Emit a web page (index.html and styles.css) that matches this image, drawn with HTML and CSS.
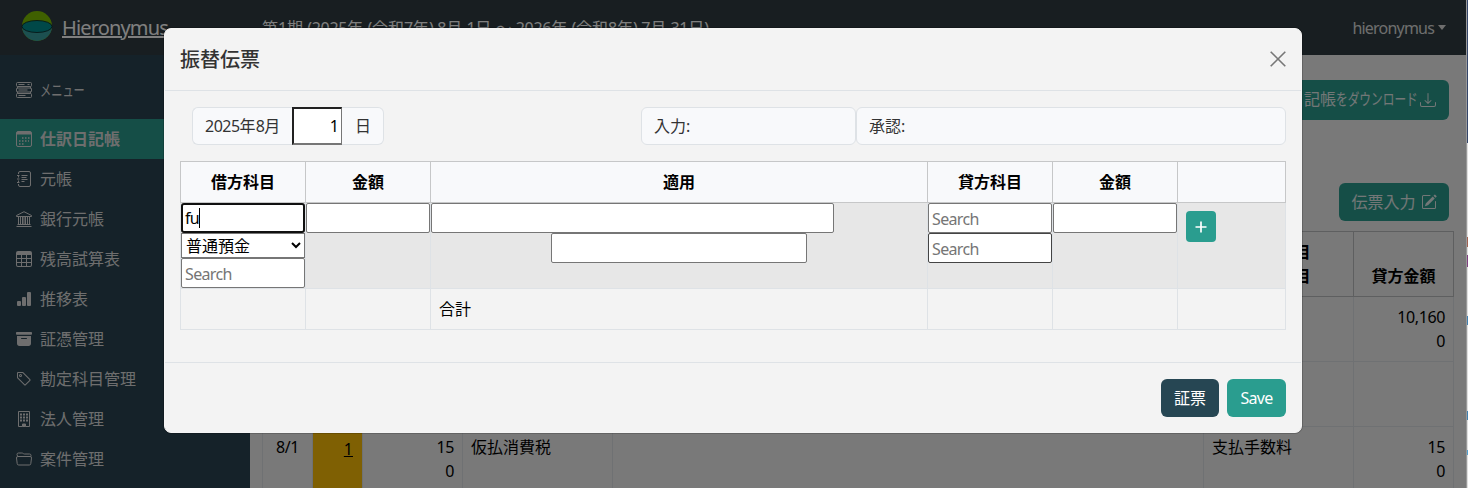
FILE: index.html
```html
<!DOCTYPE html>
<html lang="ja">
<head>
<meta charset="utf-8">
<title>Hieronymus</title>
<link rel="stylesheet" href="styles.css">
</head>
<body>
<div class="app">
  <header class="navbar">
    <svg class="logo" viewBox="0 0 32 32"><circle cx="16" cy="16" r="15" fill="#7fc000"/><path d="M1 16h30A15 15 0 0 1 1 16Z" fill="#38a0a0"/><ellipse cx="16" cy="16.500" rx="15" ry="6" fill="#009090" stroke="#0a2020" stroke-width=".8"/></svg>
    <a class="brand">Hieronymus</a>
    <div class="period">第<span class="n">1</span>期 <span class="n">(2025</span>年 <span class="n">(</span>令和<span class="n">7</span>年<span class="n">) 8</span>月 <span class="n">1</span>日 <span class="wave">〜</span> <span class="n">2026</span>年 <span class="n">(</span>令和<span class="n">8</span>年<span class="n">) 7</span>月 <span class="n">31</span>日<span class="n">)</span></div>
    <div class="user">hieronymus<i class="caret"></i></div>
  </header>
  <div class="body">
    <nav class="sidebar">
      <a class="item menu"><svg viewBox="0 0 16 16" class="line"><rect x=".5" y=".5" width="15" height="4" rx="1"/><path d="M1.500 4.500v2M14.500 4.500v2M1.500 9.500v2M14.500 9.500v2" /><rect x=".5" y="6" width="15" height="4" rx="1"/><rect x=".5" y="11.500" width="15" height="4" rx="1"/><path d="M2.500 2.500h6M2.500 8h9M2.500 13.500h7M11.500 2.500h2"/></svg><span class="kana">メニュー</span></a>
      <a class="item active"><svg viewBox="0 0 16 16" class="line"><rect x=".5" y=".5" width="15" height="15" rx="1.500"/><path d="M1 1h14v2.500H1z" fill="currentColor" stroke="none"/><path d="M6 7h8M3 10h10M3 13h6" stroke-dasharray="1.500 1.500" stroke-width="1.500"/></svg><span>仕訳日記帳</span></a>
      <a class="item"><svg viewBox="0 0 16 16" class="line"><path d="M2.500 3V2a1.500 1.500 0 0 1 1.500-1.500h9A1.500 1.500 0 0 1 14.500 2v12a1.500 1.500 0 0 1-1.500 1.500H4A1.500 1.500 0 0 1 2.500 14v-1M2.500 5v1.500M2.500 9.500V11M1 4.500h2.500M1 8h2.500M1 11.500h2.500M5.500 4.500h6M5.500 6.500h5M5.500 8.500h6M5.500 10.500h3"/></svg><span>元帳</span></a>
      <a class="item"><svg viewBox="0 0 16 16" class="line"><path d="M.5 4.500L8 .7l7.500 3.800v1H.5zM1.500 13.500h13M.5 15.500h15M2.500 6v7M4.500 6v7M6.500 6v7M9.500 6v7M11.500 6v7M13.500 6v7"/><path d="M7 6h2v7H7z" fill="currentColor" opacity=".5" stroke="none"/></svg><span>銀行元帳</span></a>
      <a class="item"><svg viewBox="0 0 16 16" fill="currentColor"><path d="M0 2a2 2 0 0 1 2-2h12a2 2 0 0 1 2 2v12a2 2 0 0 1-2 2H2a2 2 0 0 1-2-2zm15 2h-4v3h4zm0 4h-4v3h4zm0 4h-4v3h3a1 1 0 0 0 1-1zm-5 3v-3H6v3zm-5 0v-3H1v2a1 1 0 0 0 1 1zm-4-4h4V8H1zm0-4h4V4H1zm5-3v3h4V4zm4 4H6v3h4z"/></svg><span>残高試算表</span></a>
      <a class="item"><svg viewBox="0 0 16 16" fill="currentColor"><rect x="1" y="10" width="4" height="5" rx="1"/><rect x="6" y="6" width="4" height="9" rx="1"/><rect x="11" y="1" width="4" height="14" rx="1"/></svg><span>推移表</span></a>
      <a class="item"><svg viewBox="0 0 16 16" fill="currentColor"><path d="M12.643 15C13.979 15 15 13.845 15 12.500V5H1v7.500C1 13.845 2.021 15 3.357 15zM5.500 7h5a.5.5 0 0 1 0 1h-5a.5.5 0 0 1 0-1M.8 1a.8.8 0 0 0-.8.8V3a.8.8 0 0 0 .8.8h14.400A.8.8 0 0 0 16 3V1.800a.8.8 0 0 0-.8-.8z"/></svg><span>証憑管理</span></a>
      <a class="item"><svg viewBox="0 0 16 16" fill="currentColor"><path d="M6 4.500a1.500 1.500 0 1 1-3 0 1.500 1.500 0 0 1 3 0m-1 0a.5.5 0 1 0-1 0 .5.5 0 0 0 1 0"/><path d="M2 1h4.586a1 1 0 0 1 .707.293l7 7a1 1 0 0 1 0 1.414l-4.586 4.586a1 1 0 0 1-1.414 0l-7-7A1 1 0 0 1 1 6.586V2a1 1 0 0 1 1-1m0 5.586 7 7L13.586 9l-7-7H2z"/></svg><span>勘定科目管理</span></a>
      <a class="item"><svg viewBox="0 0 16 16" class="line"><path d="M2.500.5h11v15h-4V13h-3v2.500h-4z"/><path d="M4 3.500h8M4 6.500h8M4 9.500h8" stroke-width="2" stroke-dasharray="2 1"/><path d="M6.500 13h3v3h-3z" fill="currentColor" stroke="none"/></svg><span>法人管理</span></a>
      <a class="item"><svg viewBox="0 0 16 16" class="line"><path d="M1.500 5L1 3.500A1.500 1.500 0 0 1 2.500 2h3.300q.8 0 1.400.5t1.400.5h4.900A1.500 1.500 0 0 1 15 4.500v.7M2 5.500h12a1.400 1.400 0 0 1 1.500 1.600l-.7 5.500A1.500 1.500 0 0 1 13.300 14H2.700a1.500 1.500 0 0 1-1.500-1.400L.5 7A1.400 1.400 0 0 1 2 5.500z"/></svg><span>案件管理</span></a>
    </nav>
    <main class="main">
      <div class="actions">
        <button class="btn btn-green dl">仕訳日記帳<span class="kana kana-dl">をダウンロード</span><svg viewBox="0 0 16 16" fill="currentColor"><path d="M.5 9.900a.5.5 0 0 1 .5.5v2.500a1 1 0 0 0 1 1h12a1 1 0 0 0 1-1v-2.500a.5.5 0 0 1 1 0v2.500a2 2 0 0 1-2 2H2a2 2 0 0 1-2-2v-2.500a.5.5 0 0 1 .5-.5"/><path d="M7.646 11.854a.5.5 0 0 0 .708 0l3-3a.5.5 0 0 0-.708-.708L8.500 10.293V1.500a.5.5 0 0 0-1 0v8.793L5.354 8.146a.5.5 0 1 0-.708.708z"/></svg></button>
        <button class="btn btn-green entry">伝票入力<svg viewBox="0 0 16 16" fill="currentColor"><path d="M15.502 1.940a.5.5 0 0 1 0 .706L14.459 3.690l-2-2L13.502.646a.5.5 0 0 1 .707 0l1.293 1.293zm-1.750 2.456-2-2L4.939 9.210a.5.5 0 0 0-.121.196l-.805 2.414a.25.25 0 0 0 .316.316l2.414-.805a.5.5 0 0 0 .196-.12z"/><path fill-rule="evenodd" d="M1 13.500A1.500 1.500 0 0 0 2.500 15h11a1.500 1.500 0 0 0 1.500-1.500v-6a.5.5 0 0 0-1 0v6a.5.5 0 0 1-.5.5h-11a.5.5 0 0 1-.5-.5v-11a.5.5 0 0 1 .5-.5H9a.5.5 0 0 0 0-1H2.500A1.500 1.500 0 0 0 1 2.500z"/></svg></button>
      </div>
      <table class="journal">
        <colgroup><col class="c50"><col class="c50"><col class="c100"><col class="c150"><col><col class="c150"><col class="c100"></colgroup>
        <thead><tr><th>日付</th><th>番号</th><th>借方金額</th><th>借方科目<br>補助科目</th><th>摘要</th><th>貸方科目<br>補助科目</th><th>貸方金額</th></tr></thead>
        <tbody>
          <tr><td></td><td></td><td></td><td></td><td></td><td></td><td class="num">10,160<br>0</td></tr>
          <tr><td></td><td></td><td></td><td></td><td></td><td></td><td></td></tr>
          <tr><td class="day">8/1</td><td class="no"><a>1</a></td><td class="num">15<br>0</td><td>仮払消費税</td><td></td><td>支払手数料</td><td class="num">15<br>0</td></tr>
        </tbody>
      </table>
    </main>
  </div>
</div>
<div class="backdrop">
  <section class="modal">
    <header class="modal-head"><h5>振替伝票</h5><svg class="close" viewBox="0 0 16 16"><path d="M.7.7l14.600 14.600M15.300.7L.7 15.300"/></svg></header>
    <div class="modal-body">
      <div class="info">
        <div class="group"><span class="tag first"><span class="n">2025</span>年<span class="n">8</span>月</span><input class="date" value="1"><span class="tag last">日</span></div>
        <span class="tag by">入力:</span><span class="tag ok">承認:</span>
      </div>
      <table class="slip">
        <colgroup><col class="acc"><col class="acc"><col><col class="acc"><col class="acc"><col class="act"></colgroup>
        <thead><tr><th>借方科目</th><th>金額</th><th>適用</th><th>貸方科目</th><th>金額</th><th></th></tr></thead>
        <tbody>
          <tr class="entry-row">
            <td><div class="typing">fu<i class="cursor"></i></div><select><option>普通預金</option></select><input placeholder="Search"></td>
            <td><input></td>
            <td><input class="memo"><input class="sub"></td>
            <td><input placeholder="Search"><input class="dark" placeholder="Search"></td>
            <td><input></td>
            <td><button class="plus"><svg viewBox="0 0 16 16"><path d="M8 2.500v11M2.500 8h11"/></svg></button></td>
          </tr>
          <tr class="total"><td></td><td></td><td>合計</td><td></td><td></td><td></td></tr>
        </tbody>
      </table>
    </div>
    <footer class="modal-foot"><button class="btn btn-navy">証票</button><button class="btn btn-green save">Save</button></footer>
  </section>
</div>
<div class="edge"></div>
</body>
</html>
```
FILE: styles.css
```css
*{box-sizing:border-box}
body{margin:0;height:488px;overflow:hidden;position:relative;font:16px/24px "Noto Sans","Noto Sans CJK JP",sans-serif;color:#000;background:#f3f3f3}
button,input,select{font:inherit;margin:0}
.n{letter-spacing:-.5px}
.wave{display:inline-block;width:16px;font-family:"Noto Sans CJK JP",sans-serif;line-height:20px}
.app{width:1466px;height:488px;overflow:hidden}
.line{fill:none;stroke:currentColor;stroke-width:1}
.navbar{height:55px;background:#303d42;display:flex;align-items:center;color:#fff;position:relative}
.logo{width:32px;height:32px;margin:-4px 9px 0 21px}
.brand{font-size:20px;letter-spacing:-.85px;text-decoration:underline;width:200px;line-height:30px}
.period{flex:1;white-space:nowrap;letter-spacing:.05px}
.period .n{letter-spacing:-.3px}
.user{letter-spacing:-.8px;margin-right:20px;display:flex;align-items:center;color:#ddd}
.caret{border:5px solid transparent;border-top-color:#ddd;border-bottom:0;margin-left:4px;border-left-width:4px;border-right-width:4px}
.body{display:flex;height:433px}
.sidebar{width:250px;background:#2a4553;color:#ddd;padding-top:15px;flex:none}
.item{display:flex;align-items:center;height:40px;padding-left:16px;gap:8px}
.item svg{width:16px;height:16px;flex:none}
.item.menu{margin-bottom:9px}
.item.active{background:#2a9d8f;font-weight:700}
.kana{display:inline-block;transform:scaleX(.7);transform-origin:0 50%;white-space:nowrap}
.main{flex:1;padding:25px 12px 0}
.actions{display:flex;flex-direction:column;align-items:flex-end;margin-right:5px}
.btn{display:flex;align-items:center;justify-content:center;border:0;border-radius:6px;height:38px;color:#fff;white-space:nowrap;padding:0}
.btn-green{background:#2a9d8f}
.btn-navy{background:#264653;width:58px}
.btn svg{width:16px;height:16px;margin-left:5px}
.dl{height:40px;width:240px;justify-content:flex-end;padding:0 13px 2px 0;color:#e6eeee}
.dl svg{margin-top:2px}
.kana-dl{width:80px;transform:scaleX(.73)}
.kana-dl + svg{margin-left:4px}
.entry{width:110px;margin-top:63px;color:#e6eeee}
table{border-collapse:collapse;table-layout:fixed}
.journal{width:1192px;margin-top:10px}
.c50{width:50px}.c100{width:100px}.c150{width:150px}
.journal th{height:65px;padding:8px;vertical-align:bottom;border:1px solid #bdbfc1;background:#f3f3f3}
.journal td{height:65px;padding:8px;vertical-align:top;border:1px solid #dee2e6}
.journal .num{text-align:right;letter-spacing:-.4px}
.journal .day{text-align:center;letter-spacing:-.4px}
.journal .no{background:#ffc107;text-align:right;padding:10px 9px 0 0}
.no a{text-decoration:underline}
.backdrop{position:absolute;top:0;left:0;width:1466px;height:488px;background:rgba(0,0,0,.5);display:flex;justify-content:center;align-items:flex-start;padding-top:28px}
.modal{width:1138px;height:405px;background:#f3f3f3;border-radius:7px;border:1px solid #f5f5f5;outline:1px solid rgba(0,0,0,.18)}
.modal-head{height:62px;border-bottom:1px solid #dee2e6;padding:0 15px 2px;display:flex;align-items:center;justify-content:space-between}
.modal-head h5{margin:0;font-size:20px;font-weight:500;color:#333;font-family:"Noto Sans CJK JP",sans-serif}
.close{width:16px;height:16px;stroke:#777;stroke-width:1.600}
.modal-body{padding:16px 15px 0;height:271px}
.info{display:flex;padding-left:12px;height:38px}
.group{display:flex;width:449px}
.tag{background:#f8f9fb;border:1px solid #dee2e6;border-radius:6px;padding:6px 12px;color:#333;white-space:nowrap}
.first{border-radius:6px 0 0 6px;width:101px;border-right:0}
.last{border-radius:0 6px 6px 0;width:42px;border-left:0;padding-left:13px}
.date{width:50px;height:38px;margin-left:-1px;border:2px inset #767676;border-right-width:1px;text-align:right;padding:1px 2px;background:#fff}
.by{width:215px}.ok{width:430px}
.slip{width:1106px;margin-top:16px}
.acc{width:125px}.act{width:108px}
.slip th{height:41px;padding:7px 8px 9px;background:#f8f9fb;border:1px solid #c6c7c8;font-family:"Noto Sans CJK JP",sans-serif;line-height:24px}
.slip td{padding:0;border:1px solid #dee2e6;vertical-align:top}
.entry-row{height:86px;background:#e7e7e7}
.slip input,.typing{display:block;width:100%;height:30px;border:1px solid #767676;border-radius:2px;background:#fff;padding:2px 3px 1px;letter-spacing:-.65px;outline:0}
.slip input::placeholder{color:#757575}
.slip .typing{border:2px solid #101010;border-radius:3px;display:flex;align-items:center;padding:0 2px}
.cursor{width:1px;height:20px;background:#000;margin-left:0}
.slip select{display:block;width:100%;height:25px;border:1px solid #767676;border-radius:0;background:#fff;padding:0;color:#000}
.slip .dark{border-color:#444}
.slip .memo{width:403px}.slip .sub{width:256px;margin:0 auto}
.plus{width:30px;height:31px;margin:8px;border:0;border-radius:4px;background:#2a9d8f;display:flex;align-items:center;justify-content:center;padding:0}
.plus svg{width:16px;height:16px;stroke:#fff;stroke-width:1.700}
.slip .total td{height:41px;padding:8px}
.modal-foot{border-top:1px solid #dee2e6;padding:16px 15px 0;display:flex;justify-content:flex-end;gap:8px}
.save{width:59px;letter-spacing:-.7px}
.edge{position:absolute;right:0;top:0;width:2px;height:488px;border-left:1px solid #999;background:linear-gradient(#34466a 0 143px,#dedede 143px 237px,#a06050 237px 247px,#dedede 247px 255px,#804080 255px 267px,#dedede 267px 316px,#4080b0 316px 325px,#dedede 325px 411px,#4080b0 411px 420px,#dedede 420px 450px,#50a0d0 450px 455px,#dedede 455px)}
```
